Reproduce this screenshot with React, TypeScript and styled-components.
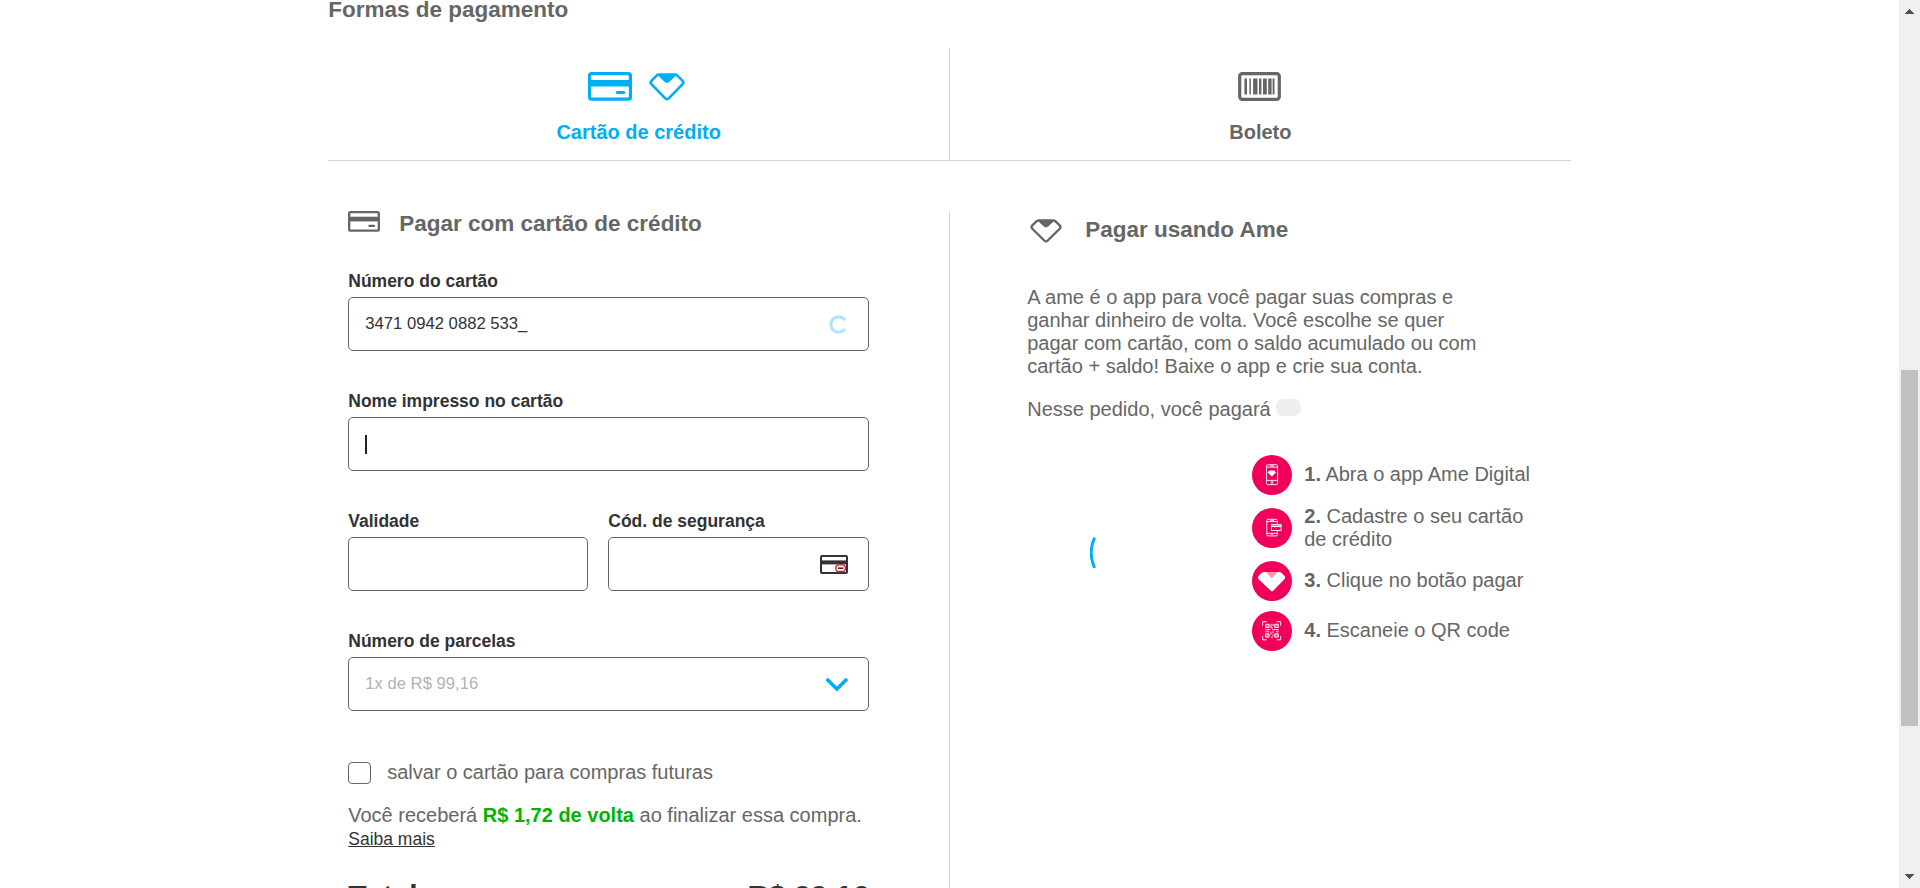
import React from "react";
import styled, { createGlobalStyle } from "styled-components";

const GlobalStyle = createGlobalStyle`
  * { box-sizing: border-box; }
  body { margin: 0; background: #fff; font-family: "Liberation Sans", Arial, sans-serif; color: #666; font-size: 20px; line-height: 23px; }
  h1, h2, p, ol { margin: 0; padding: 0; }
  svg { display: block; flex: none; }
`;

const Viewport = styled.div`
  display: flex;
  height: 888px;
  overflow: hidden;
`;
const Page = styled.main`
  flex: 1;
  display: flex;
  flex-direction: column;
  align-items: center;
`;
const Container = styled.div`
  width: 1242.5px;
  flex: none;
`;
const Title = styled.h1`
  font-size: 22.5px;
  line-height: 26px;
  margin-top: -3px;
`;
const Tabs = styled.div`
  display: flex;
  height: 113px;
  margin-top: 25px;
  border-bottom: 1px solid #d4d4d4;
`;
const Tab = styled.button<{ $active?: boolean }>`
  flex: 1;
  display: flex;
  flex-direction: column;
  align-items: center;
  padding: 24px 0 0;
  border: 0;
  background: none;
  font: bold 20px/23px "Liberation Sans", Arial, sans-serif;
  color: ${(p) => (p.$active ? "#00aef3" : "#666")};
  & + & { border-left: 1px solid #d4d4d4; }
`;
const TabIcons = styled.div<{ $trailing: number }>`
  display: flex;
  gap: 17px;
  height: 29px;
  align-items: center;
  margin-bottom: 20px;
  padding-right: ${(p) => p.$trailing}px;
`;
const Columns = styled.div`
  display: flex;
  margin-top: 50px;
`;
const CardPanel = styled.section`
  width: 621px;
  padding: 0 80px 0 20px;
`;
const AmePanel = styled.section`
  flex: 1;
  min-height: 720px;
  border-left: 1px solid #d4d4d4;
  padding: 6px 19px 0 77px;
`;
const PanelTitle = styled.h2<{ $gap: number; $top?: boolean }>`
  display: flex;
  align-items: ${(p) => (p.$top ? "flex-start" : "center")};
  gap: ${(p) => p.$gap}px;
  height: 26px;
  font-size: 22.5px;
  line-height: 26px;
`;
const Fields = styled.div`
  display: grid;
  grid-template-columns: 240px 261px;
  column-gap: 20px;
  row-gap: 40px;
  margin-top: 34px;
`;
const Field = styled.label<{ $wide?: boolean }>`
  grid-column: ${(p) => (p.$wide ? "1 / -1" : "auto")};
  height: 80px;
  font-size: 17.5px;
  line-height: 20px;
  font-weight: bold;
  color: #333;
`;
const Box = styled.div<{ $muted?: boolean }>`
  display: flex;
  align-items: center;
  height: 54px;
  margin-top: 6px;
  padding: 0 20px 0 16px;
  border: 1px solid #666;
  border-radius: 5px;
  font-size: 16.67px;
  font-weight: normal;
  color: ${(p) => (p.$muted ? "#b2b2b2" : "#333")};
`;
const Value = styled.span`
  flex: 1;
  padding-bottom: 1px;
`;
const Caret = styled.span`
  width: 2px;
  height: 19px;
  background: #222;
`;
const SaveCard = styled.label`
  display: flex;
  align-items: center;
  gap: 16px;
  margin-top: 50px;
`;
const Check = styled.span`
  width: 23px;
  height: 22px;
  border: 1px solid #666;
  border-radius: 4px;
`;
const Cashback = styled.p`
  margin-top: 20px;
  white-space: nowrap;
  strong { color: #00b300; }
`;
const More = styled.a`
  display: block;
  font-size: 17.5px;
  line-height: 20px;
  margin-top: 2px;
  color: #333;
  text-decoration: underline;
`;
const Total = styled.div`
  display: flex;
  justify-content: space-between;
  margin-top: 30px;
  font-size: 30px;
  line-height: 34px;
  font-weight: bold;
  color: #333;
`;
const Pitch = styled.p`
  width: 462px;
  margin-top: 43px;
`;
const Pay = styled.p`
  display: flex;
  gap: 5px;
  margin-top: 20px;
`;
const Placeholder = styled.span`
  width: 25px;
  height: 17px;
  margin-top: 1px;
  border-radius: 7px;
  background: #eee;
`;
const Ame = styled.div`
  display: flex;
  margin-top: 34px;
`;
const AmeMark = styled.span`
  padding-left: 3px;
`;
const Loading = styled.div`
  width: 225px;
  padding: 81px 0 0 63px;
`;
const Steps = styled.ol`
  display: flex;
  flex-direction: column;
  gap: 10px;
  list-style: none;
`;
const Step = styled.li`
  display: flex;
  align-items: center;
  gap: 12px;
  min-height: 40px;
`;
const StepText = styled.span<{ $single: boolean }>`
  width: 232px;
  padding-bottom: ${(p) => (p.$single ? 1 : 0)}px;
`;
const Scrollbar = styled.div`
  display: flex;
  flex-direction: column;
  align-items: center;
  width: 21px;
  padding: 9px 0;
  background: #f0f0f0;
`;
const Thumb = styled.div`
  width: 17px;
  height: 356px;
  margin: 356px 0 auto;
  background: #c1c1c1;
`;

const CardIcon = ({ width = 44, height = 29 }) => (
  <svg width={width} height={height} viewBox="0 0 44 29" fill="none" preserveAspectRatio="none">
    <rect x="1.6" y="1.6" width="40.8" height="25.6" rx="2" stroke="currentColor" strokeWidth="3.2" />
    <path d="M2 7.9h40v6.5H2z" fill="currentColor" />
    <path d="M29.4 20.5h6.4" stroke="currentColor" strokeWidth="3.2" strokeLinecap="round" />
  </svg>
);

const AmeIcon = ({ width = 36, height = 29 }) => (
  <svg width={width} height={height} viewBox="0 -1 36 29" fill="none" preserveAspectRatio="none">
    <path
      d="M9.8 1.7H26.2Q27.5 1.7 28.4 2.6L33.4 7.6Q35.2 9.5 33.4 11.4L20 25.1Q18 27.1 16 25.1L2.6 11.4Q.8 9.5 2.6 7.6L7.6 2.6Q8.5 1.7 9.8 1.7Z"
      stroke="currentColor"
      strokeWidth="2.7"
    />
    <path d="M8 1.6H28L20.8 8.6Q18 11.2 15.2 8.6Z" fill="currentColor" />
  </svg>
);

const BarcodeIcon = () => (
  <svg width="43" height="29" viewBox="0 0 43 29" fill="none">
    <rect x="1.7" y="1.7" width="39.6" height="25.6" rx="2.6" stroke="currentColor" strokeWidth="3.2" />
    <path
      d="M6.4 6.6h2.6v15.8H6.4zM11.4 6.6h1.5v15.8h-1.5zM15.1 6.6h4.4v15.8h-4.4zM21 6.6h2.4v15.8H21zM25 6.6h3.8v15.8H25zM30.2 6.6h3.4v15.8h-3.4zM34.6 6.6h1.9v15.8h-1.9z"
      fill="currentColor"
    />
  </svg>
);

const InputSpinner = () => (
  <svg width="19" height="19" viewBox="0 0 19 19" fill="none">
    <path d="M15.9 5.2A7.7 7.7 0 1 0 15.9 13.9" stroke="#aee6fc" strokeWidth="3.2" />
  </svg>
);

const SecurityIcon = () => (
  <svg width="28" height="19" viewBox="0 0 28 19" fill="none">
    <rect x="1" y="1" width="26" height="17" rx="1" stroke="#333" strokeWidth="2" />
    <path d="M1 5.4h26v4H1z" fill="#333" />
    <rect x="15.8" y="9.9" width="9.6" height="6.6" rx="3.3" fill="#fff" stroke="#f01428" strokeWidth="1.4" />
    <path d="M17.8 13.2h5.6" stroke="#333" strokeWidth="1.6" />
  </svg>
);

const Chevron = () => (
  <svg width="23" height="15" viewBox="0 0 23 15" fill="none">
    <path d="M2.8 3L11.9 12L21 3" stroke="#00aef3" strokeWidth="3.6" strokeLinecap="round" />
  </svg>
);

const Arc = () => (
  <svg width="8" height="34" viewBox="0 0 8 34" fill="none">
    <path d="M4.6 1.6Q-2.2 16.8 4.6 32" stroke="#00aef3" strokeWidth="2.9" />
  </svg>
);

const stepIcons = [
  <g key="phone">
    <rect x="14.6" y="9.7" width="11" height="20" rx="1.2" />
    <path d="M14.6 12.1h11M14.6 25.4h11M18 10.9h4" />
    <circle cx="20" cy="27.5" r="1" />
    <path d="M17.5 15.6h4.8l1.8 1.9-4.2 4.1-4.2-4.1z" fill="#fff" stroke="none" />
  </g>,
  <g key="card">
    <path d="M25.4 16v-3.5q0-1.2-1.2-1.2h-8.2q-1.2 0-1.2 1.2v14.2q0 1.2 1.2 1.2h8.2q1.2 0 1.2-1.2V23M14.8 13.6h10.6M14.8 25.4h10.6M18 12.4h4M19 26.8h2" />
    <rect x="19.5" y="16.6" width="9.6" height="6" />
    <path d="M19.5 18.3h9.6" strokeWidth="1.5" />
  </g>,
  <g key="ame" stroke="none">
    <path d="M13 10.9H27Q28.6 10.9 29.6 11.9L32.2 14.6Q34 16.6 32.2 18.6L21.5 29.6Q20 31.2 18.5 29.6L6.9 18.6Q5.1 16.6 6.9 14.6L9.6 11.9Q10.6 10.9 13 10.9Z" fill="#fff" />
    <path d="M13.8 11H25.6L20.6 16.4Q19.7 17.3 18.8 16.4Z" fill="#f79aae" />
  </g>,
  <g key="qr">
    <path d="M10.7 14.6v-3.9h4M24.7 10.7h4v3.9M10.7 24.9v3.9h4M24.7 28.8h4v-3.9" />
    <path d="M13.5 13.3h3.6v3.2h-3.6zM22.7 13.3h3.6v3.2h-3.6zM13.5 22.9h3.6v3.2h-3.6zM22.7 22.9h3.6v3.2h-3.6z" fill="#fff" fillOpacity="0.35" />
    <path d="M19 12.8v4h2M13 18.7h5.2M20 18.7h6.8M13 20.8h4.2M19 20.8v3M21 20v2.4M24 20.8h2.8M18.8 26.2h2.4M20.8 23.6v1.4M21 12.8v2.2" />
  </g>,
];

const steps = [
  { text: "Abra o app Ame Digital", single: true },
  { text: "Cadastre o seu cartão de crédito", single: false },
  { text: "Clique no botão pagar", single: true },
  { text: "Escaneie o QR code", single: true },
];

const ScrollArrow = ({ down = false }) => (
  <svg width="9" height="5" viewBox="0 0 9 5" shapeRendering="crispEdges">
    <path d={down ? "M0 0H9V1H8V2H7V3H6V4H5V5H4V4H3V3H2V2H1V1H0Z" : "M4 0H5V1H6V2H7V3H8V4H9V5H0V4H1V3H2V2H3V1H4Z"} fill="#505050" />
  </svg>
);

export default function App() {
  return (
    <Viewport>
      <GlobalStyle />
      <Page>
        <Container>
          <Title>Formas de pagamento</Title>
          <Tabs>
            <Tab $active>
              <TabIcons $trailing={4}>
                <CardIcon />
                <AmeIcon />
              </TabIcons>
              Cartão de crédito
            </Tab>
            <Tab>
              <TabIcons $trailing={2}>
                <BarcodeIcon />
              </TabIcons>
              Boleto
            </Tab>
          </Tabs>
          <Columns>
            <CardPanel>
              <PanelTitle $gap={19} $top>
                <CardIcon width={32} height={21} />
                Pagar com cartão de crédito
              </PanelTitle>
              <Fields>
                <Field $wide>
                  Número do cartão
                  <Box>
                    <Value>3471 0942 0882 533_</Value>
                    <InputSpinner />
                  </Box>
                </Field>
                <Field $wide>
                  Nome impresso no cartão
                  <Box>
                    <Caret />
                  </Box>
                </Field>
                <Field>
                  Validade
                  <Box />
                </Field>
                <Field>
                  Cód. de segurança
                  <Box>
                    <Value />
                    <SecurityIcon />
                  </Box>
                </Field>
                <Field $wide>
                  Número de parcelas
                  <Box $muted>
                    <Value>1x de R$ 99,16</Value>
                    <Chevron />
                  </Box>
                </Field>
              </Fields>
              <SaveCard>
                <Check />
                salvar o cartão para compras futuras
              </SaveCard>
              <Cashback>
                Você receberá <strong>R$ 1,72 de volta</strong> ao finalizar essa compra.
              </Cashback>
              <More>Saiba mais</More>
              <Total>
                <span>Total</span>
                <span>R$ 99,16</span>
              </Total>
            </CardPanel>
            <AmePanel>
              <PanelTitle $gap={23}>
                <AmeMark>
                  <AmeIcon width={32} height={25} />
                </AmeMark>
                Pagar usando Ame
              </PanelTitle>
              <Pitch>
                A ame é o app para você pagar suas compras e ganhar dinheiro de volta. Você escolhe se quer pagar com
                cartão, com o saldo acumulado ou com cartão + saldo! Baixe o app e crie sua conta.
              </Pitch>
              <Pay>
                Nesse pedido, você pagará <Placeholder />
              </Pay>
              <Ame>
                <Loading>
                  <Arc />
                </Loading>
                <Steps>
                  {steps.map(({ text, single }, i) => (
                    <Step key={text}>
                      <svg width="40" height="40" viewBox="0 0 40 40" fill="none" stroke="#fff" strokeWidth="0.9">
                        <circle cx="20" cy="20" r="20" fill="#f0005a" stroke="none" />
                        {stepIcons[i]}
                      </svg>
                      <StepText $single={single}>
                        <strong>{i + 1}.</strong> {text}
                      </StepText>
                    </Step>
                  ))}
                </Steps>
              </Ame>
            </AmePanel>
          </Columns>
        </Container>
      </Page>
      <Scrollbar>
        <ScrollArrow />
        <Thumb />
        <ScrollArrow down />
      </Scrollbar>
    </Viewport>
  );
}
